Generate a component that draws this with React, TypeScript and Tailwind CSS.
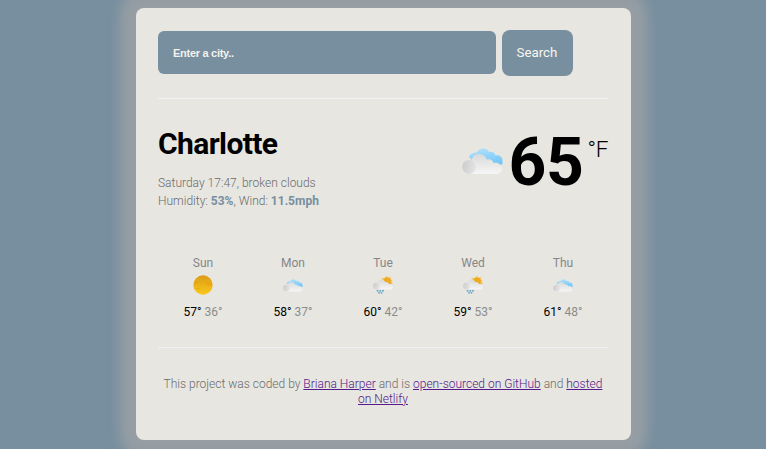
import React from "react";

type IconKind = "sun" | "cloud" | "shower";

function CloudShape({ id }: { id: string }) {
  return (
    <>
      <defs>
        <linearGradient id={`${id}-front`} x1="0" y1="0" x2="0" y2="1">
          <stop offset="0" stopColor="#d9d9da" />
          <stop offset="1" stopColor="#f6f6f6" />
        </linearGradient>
        <linearGradient id={`${id}-puff`} x1="0" y1="0.4" x2="1" y2="0.6">
          <stop offset="0" stopColor="#cdcdce" />
          <stop offset="1" stopColor="#e4e4e5" />
        </linearGradient>
      </defs>
      <path
        d="M6.500 26a6.500 6.500 0 0 1-.3-13c1.200 0 2 .2 3 .7C10 9 12.500 6 17 6c3.600 0 6.500 2.300 7.600 5.500 3.400-1 6.200.5 7 3.500C36 14 40 16.500 40 20.300c0 3.400-2.200 5.700-5.500 5.700z"
        fill={`url(#${id}-front)`}
      />
      <circle cx="7" cy="19" r="6.900" fill={`url(#${id}-puff)`} />
    </>
  );
}

function WeatherIcon({ kind, id, className }: { kind: IconKind; id: string; className: string }) {
  if (kind === "sun") {
    return (
      <svg viewBox="0 0 20 20" className={className}>
        <defs>
          <linearGradient id={id} x1="0" y1="0" x2="0" y2="1">
            <stop offset="0" stopColor="#dc9c15" />
            <stop offset="1" stopColor="#f9c91c" />
          </linearGradient>
        </defs>
        <circle cx="10" cy="10" r="9.700" fill={`url(#${id})`} />
        <path d="M12 8.500q2-2 4-.5l3 .5v2l-4 .5z" fill="#eca313" opacity=".8" />
        <path d="M1 7.500l4-.5-1 1.500H1zM4 13.300l2-.4.500 1H4z" fill="#e59b12" opacity=".8" />
      </svg>
    );
  }
  if (kind === "shower") {
    return (
      <svg viewBox="0 0 40 36" className={className}>
        <path
          d="M28 0l2.500 4L36 2l-1 5 4 1-2.500 3.500L40 15l-6 3-15-7 1-3-3-4 5 .5z"
          fill="#f2bd4d"
        />
        <circle cx="28.500" cy="10" r="7" fill="#efaa1d" />
        <g transform="translate(0 1)">
          <CloudShape id={id} />
        </g>
        <g fill="#6aa9cb">
          <circle cx="9" cy="29.500" r="2" />
          <circle cx="14.500" cy="29.500" r="2" />
          <circle cx="20" cy="29.500" r="2" />
          <circle cx="12" cy="33.500" r="1.900" />
          <circle cx="17" cy="33.500" r="1.900" />
        </g>
      </svg>
    );
  }
  return (
    <svg viewBox="0 0 41 27" className={className}>
      <defs>
        <linearGradient id={`${id}-back`} x1="0" y1="0" x2="0.300" y2="1">
          <stop offset="0" stopColor="#b4e2fc" />
          <stop offset="1" stopColor="#74c6f6" />
        </linearGradient>
      </defs>
      <path
        d="M7 9C8.500 5.500 11.500 4.500 15 4.500 16.500 1.500 19 .5 21.500.5c2.500 0 4.500 1.500 5.500 3.500 3.500-.7 6 1 6.500 3.500 4-.8 7 1.300 7 5v3L38 18.500 12 14z"
        fill={`url(#${id}-back)`}
      />
      <CloudShape id={id} />
    </svg>
  );
}

const forecast: { day: string; kind: IconKind; max: number; min: number }[] = [
  { day: "Sun", kind: "sun", max: 57, min: 36 },
  { day: "Mon", kind: "cloud", max: 58, min: 37 },
  { day: "Tue", kind: "shower", max: 60, min: 42 },
  { day: "Wed", kind: "shower", max: 59, min: 53 },
  { day: "Thu", kind: "cloud", max: 61, min: 48 },
];

const iconSize: Record<IconKind, string> = {
  sun: "size-5",
  cloud: "w-5 h-[13px]",
  shower: "w-5 h-[18px]",
};

export default function App() {
  return (
    <div className="flex h-[449px] justify-center overflow-hidden bg-[#788fa0] pt-2 font-['Roboto','Liberation_Sans',sans-serif]">
      <main className="h-[432px] w-[495px] rounded-lg bg-[#e7e6e1] px-[22.500px] pt-[22px] shadow-[0_0_12px_16px_#969ea4]">
        <form className="flex h-[68.500px] items-start border-b-[1px] border-[#f0f0f5]">
          <input
            type="text"
            placeholder="Enter a city.."
            className="mt-px h-[43px] w-[337.500px] rounded-md bg-[#788fa0] px-[15px] font-['Liberation_Sans',sans-serif] text-[11px] font-bold tracking-[-0.28px] placeholder:text-[#f3f2ec] placeholder:opacity-100"
          />
          <button type="button" className="ml-1.5 h-[45.500px] w-[71px] rounded-lg bg-[#788fa0] text-[13.300px] text-[#f8f7f1]">
            Search
          </button>
        </form>
        <section className="flex h-[156px] justify-between pt-[27px]">
          <div>
            <h1 className="text-[30px] leading-[36px] font-bold tracking-[-0.6px] text-black">Charlotte</h1>
            <div className="mt-3 text-[12px] leading-[18px] font-light text-[#6c6c6c]">
              <p>Saturday 17:47, broken clouds</p>
              <p>
                Humidity: <strong className="font-bold text-[#788fa0]">53%</strong>, Wind:{" "}
                <strong className="font-bold text-[#788fa0]">11.5mph</strong>
              </p>
            </div>
          </div>
          <div className="flex items-start">
            <WeatherIcon kind="cloud" id="now" className="mt-[22px] h-[27px] w-[41px]" />
            <span className="ml-1.5 text-[66px] leading-[73px] font-bold tracking-[-0.4px] text-black">65</span>
            <span className="ml-1 mt-[9px] text-[22.500px] leading-[28px] font-light tracking-[-0.3px] text-black">°F</span>
          </div>
        </section>
        <section className="grid h-[93px] grid-cols-5 border-b border-[#f0f0f5] text-center text-[12px] leading-[16px]">
          {forecast.map(({ day, kind, max, min }) => (
            <div key={day}>
              <p className="text-[#86868a]">{day}</p>
              <div className="flex h-[29px] items-center justify-center">
                <WeatherIcon kind={kind} id={day} className={iconSize[kind]} />
              </div>
              <p className="mt-1">
                <span className="text-black">{max}°</span> <span className="text-[#8c8c8c]">{min}°</span>
              </p>
            </div>
          ))}
        </section>
        <footer className="pt-[29px] text-center text-[12px] leading-[15px] font-light text-[#6c6c6c]">
          This project was coded by <a className="text-[#551a8b] underline" href="#author">Briana Harper</a> and is{" "}
          <a className="text-[#551a8b] underline" href="#source">open-sourced on GitHub</a> and{" "}
          <a className="text-[#551a8b] underline" href="#host">hosted on Netlify</a>
        </footer>
      </main>
    </div>
  );
}
